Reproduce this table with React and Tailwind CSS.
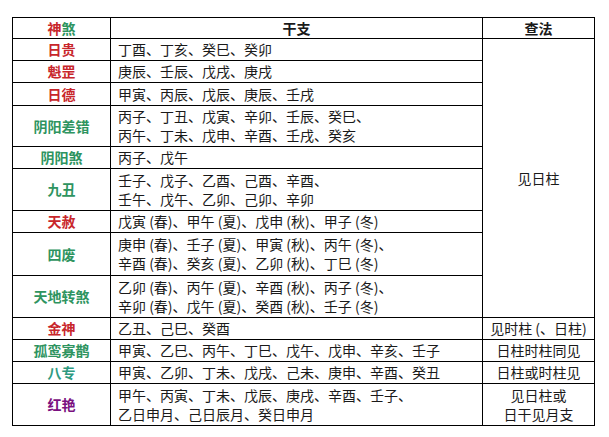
const RED = "text-[#c8262b]"
const GREEN = "text-[#2e9460]"
const TEAL = "text-[#2e9a80]"
const PURPLE = "text-[#7a1080]"

const rows = [
  { name: "日贵", color: RED, h: "h-[22px]", lines: ["丁酉、丁亥、癸巳、癸卯"] },
  { name: "魁罡", color: RED, h: "h-[21px]", lines: ["庚辰、壬辰、戊戌、庚戌"] },
  { name: "日德", color: RED, h: "h-[23px]", lines: ["甲寅、丙辰、戊辰、庚辰、壬戌"] },
  { name: "阴阳差错", color: GREEN, h: "h-[41px]", lines: ["丙子、丁丑、戊寅、辛卯、壬辰、癸巳、", "丙午、丁未、戊申、辛酉、壬戌、癸亥"] },
  { name: "阴阳煞", color: GREEN, h: "h-[22px]", lines: ["丙子、戊午"] },
  { name: "九丑", color: GREEN, h: "h-[42px]", lines: ["壬子、戊子、乙酉、己酉、辛酉、", "壬午、戊午、乙卯、己卯、辛卯"] },
  { name: "天赦", color: RED, h: "h-[21px]", lines: ["戊寅 (春)、甲午 (夏)、戊申 (秋)、甲子 (冬)"] },
  { name: "四废", color: GREEN, h: "h-[43px]", lines: ["庚申 (春)、壬子 (夏)、甲寅 (秋)、丙午 (冬)、", "辛酉 (春)、癸亥 (夏)、乙卯 (秋)、丁巳 (冬)"] },
  { name: "天地转煞", color: GREEN, h: "h-[42px]", lines: ["乙卯 (春)、丙午 (夏)、辛酉 (秋)、丙子 (冬)、", "辛卯 (春)、戊午 (夏)、癸酉 (秋)、壬子 (冬)"] },
]

const tail = [
  { name: "金神", color: RED, h: "h-[21px]", lines: ["乙丑、己巳、癸酉"], check: ["见时柱 (、日柱)"] },
  { name: "孤鸾寡鹊", color: GREEN, h: "h-[22px]", lines: ["甲寅、乙巳、丙午、丁巳、戊午、戊申、辛亥、壬子"], check: ["日柱时柱同见"] },
  { name: "八专", color: TEAL, h: "h-[21px]", lines: ["甲寅、乙卯、丁未、戊戌、己未、庚申、辛酉、癸丑"], check: ["日柱或时柱见"] },
  { name: "红艳", color: PURPLE, h: "h-[42px]", lines: ["甲午、丙寅、丁未、戊辰、庚戌、辛酉、壬子、", "乙日申月、己日辰月、癸日申月"], check: ["见日柱或", "日干见月支"] },
]

function Lines({ lines }) {
  return lines.map((l, i) => (
    <div key={i} className="leading-[19px] whitespace-pre">{l}</div>
  ))
}

export default function App() {
  return (
    <div className="w-[609px] h-[437px] bg-white pt-[17px] pl-[12px] font-['Noto_Sans_CJK_SC',sans-serif] text-[14px] text-[#1a1a1a]">
      <table className="border-collapse table-fixed w-[582px]">
        <colgroup>
          <col className="w-[98px]" />
          <col className="w-[372px]" />
          <col className="w-[112px]" />
        </colgroup>
        <tbody>
          <tr className="h-[21px]">
            <td className="border border-black text-center font-bold leading-[19px] p-0">
              <span className="text-[#c8262b]">神</span>
              <span className="text-[#2e9460]">煞</span>
            </td>
            <td className="border border-black text-center font-bold leading-[19px] p-0">干支</td>
            <td className="border border-black text-center font-bold leading-[19px] p-0">查法</td>
          </tr>
          {rows.map((r, i) => (
            <tr key={r.name} className={r.h}>
              <td className={`border border-black text-center font-bold p-0 ${r.color}`}>{r.name}</td>
              <td className="border border-black pl-[7px] p-0 align-middle">
                <Lines lines={r.lines} />
              </td>
              {i === 0 && (
                <td rowSpan={rows.length} className="border border-black text-center align-middle p-0">
                  见日柱
                </td>
              )}
            </tr>
          ))}
          {tail.map(r => (
            <tr key={r.name} className={r.h}>
              <td className={`border border-black text-center font-bold p-0 ${r.color}`}>{r.name}</td>
              <td className="border border-black pl-[7px] p-0 align-middle">
                <Lines lines={r.lines} />
              </td>
              <td className="border border-black text-center align-middle p-0">
                <Lines lines={r.check} />
              </td>
            </tr>
          ))}
        </tbody>
      </table>
    </div>
  )
}
